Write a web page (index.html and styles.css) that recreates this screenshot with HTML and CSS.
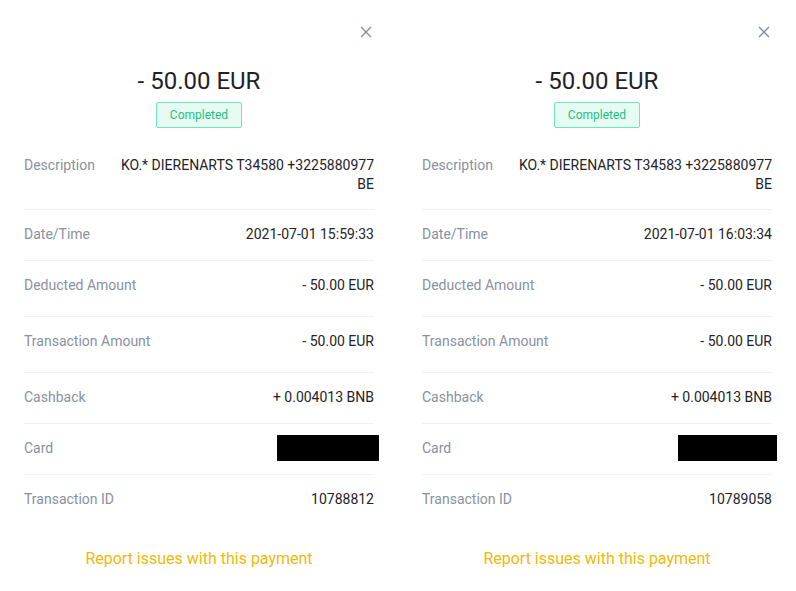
FILE: index.html
```html
<!DOCTYPE html>
<html lang="en">
<head>
<meta charset="utf-8">
<title>Transaction details</title>
<link rel="stylesheet" href="styles.css">
</head>
<body>
<div class="page">
  <section class="panel">
    <div class="close-row">
      <svg class="close" viewBox="0 0 12 12" width="12" height="12"><path d="M1 1L11 11M11 1L1 11" stroke="#848e9c" stroke-width="1.4" fill="none"/></svg>
    </div>
    <h1 class="amount">- 50.00 EUR</h1>
    <div class="badge-row"><span class="badge">Completed</span></div>
    <div class="rows">
      <div class="row row-desc"><span class="label">Description</span><span class="value">KO.* DIERENARTS T34580 +3225880977<br>BE</span></div>
      <div class="row"><span class="label">Date/Time</span><span class="value">2021-07-01 15:59:33</span></div>
      <div class="row row-tall"><span class="label">Deducted Amount</span><span class="value">- 50.00 EUR</span></div>
      <div class="row row-tall"><span class="label">Transaction Amount</span><span class="value">- 50.00 EUR</span></div>
      <div class="row"><span class="label">Cashback</span><span class="value">+ 0.004013 BNB</span></div>
      <div class="row row-card"><span class="label">Card</span><span class="redact redact-l"></span></div>
      <div class="row row-last"><span class="label">Transaction ID</span><span class="value">10788812</span></div>
    </div>
    <a class="report" href="#">Report issues with this payment</a>
  </section>
  <section class="panel">
    <div class="close-row">
      <svg class="close" viewBox="0 0 12 12" width="12" height="12"><path d="M1 1L11 11M11 1L1 11" stroke="#848e9c" stroke-width="1.4" fill="none"/></svg>
    </div>
    <h1 class="amount">- 50.00 EUR</h1>
    <div class="badge-row"><span class="badge">Completed</span></div>
    <div class="rows">
      <div class="row row-desc"><span class="label">Description</span><span class="value">KO.* DIERENARTS T34583 +3225880977<br>BE</span></div>
      <div class="row"><span class="label">Date/Time</span><span class="value">2021-07-01 16:03:34</span></div>
      <div class="row row-tall"><span class="label">Deducted Amount</span><span class="value">- 50.00 EUR</span></div>
      <div class="row row-tall"><span class="label">Transaction Amount</span><span class="value">- 50.00 EUR</span></div>
      <div class="row"><span class="label">Cashback</span><span class="value">+ 0.004013 BNB</span></div>
      <div class="row row-card"><span class="label">Card</span><span class="redact redact-r"></span></div>
      <div class="row row-last"><span class="label">Transaction ID</span><span class="value">10789058</span></div>
    </div>
    <a class="report" href="#">Report issues with this payment</a>
  </section>
</div>
</body>
</html>
```

FILE: styles.css
```css
* { box-sizing: border-box; }
html, body { margin: 0; padding: 0; background: #fff; }
body {
  font-family: Roboto, "Noto Sans", sans-serif;
  color: #1e2329;
  width: 796px;
  height: 591px;
  overflow: hidden;
}
.page {
  display: grid;
  grid-template-columns: 398px 398px;
  height: 591px;
}
.panel {
  padding: 0 24px;
  display: flex;
  flex-direction: column;
}
.close-row {
  display: flex;
  justify-content: flex-end;
  padding-top: 26px;
  padding-right: 2px;
  height: 38px;
}
.close { display: block; width: 12px; height: 12px; }
.amount {
  margin: 28px 0 0;
  font-size: 24px;
  line-height: 30px;
  font-weight: 400;
  text-align: center;
  color: #1e2329;
}
.badge-row {
  display: flex;
  justify-content: center;
  margin-top: 6px;
}
.badge {
  width: 86px;
  height: 26px;
  border: 1px solid #6ee6bb;
  background: #e6fcf3;
  color: #1fbf7f;
  font-size: 12px;
  line-height: 24px;
  text-align: center;
  border-radius: 2px;
}
.rows { margin-top: 13px; }
.row {
  display: flex;
  justify-content: space-between;
  align-items: flex-start;
  padding: 15px 0 16px;
  border-bottom: 1px solid #f1f2f4;
  font-size: 14px;
  line-height: 19px;
}
.row-desc { padding-bottom: 15px; }
.row-tall { padding-bottom: 21px; }
.row-last { border-bottom: none; }
.row-card { align-items: center; }
.label { color: #8a919d; white-space: nowrap; }
.value { color: #1e2329; text-align: right; }
.row-desc .value { max-width: 260px; }
.redact {
  display: block;
  height: 26px;
  background: #000;
  margin: -4px 0 -3px;
}
.redact-l { width: 102px; margin-right: -5px; }
.redact-r { width: 99px; margin-right: -5px; }
.report {
  display: block;
  margin-top: 24px;
  text-align: center;
  color: #f0b90b;
  font-size: 16px;
  line-height: 20px;
  text-decoration: none;
}
```
